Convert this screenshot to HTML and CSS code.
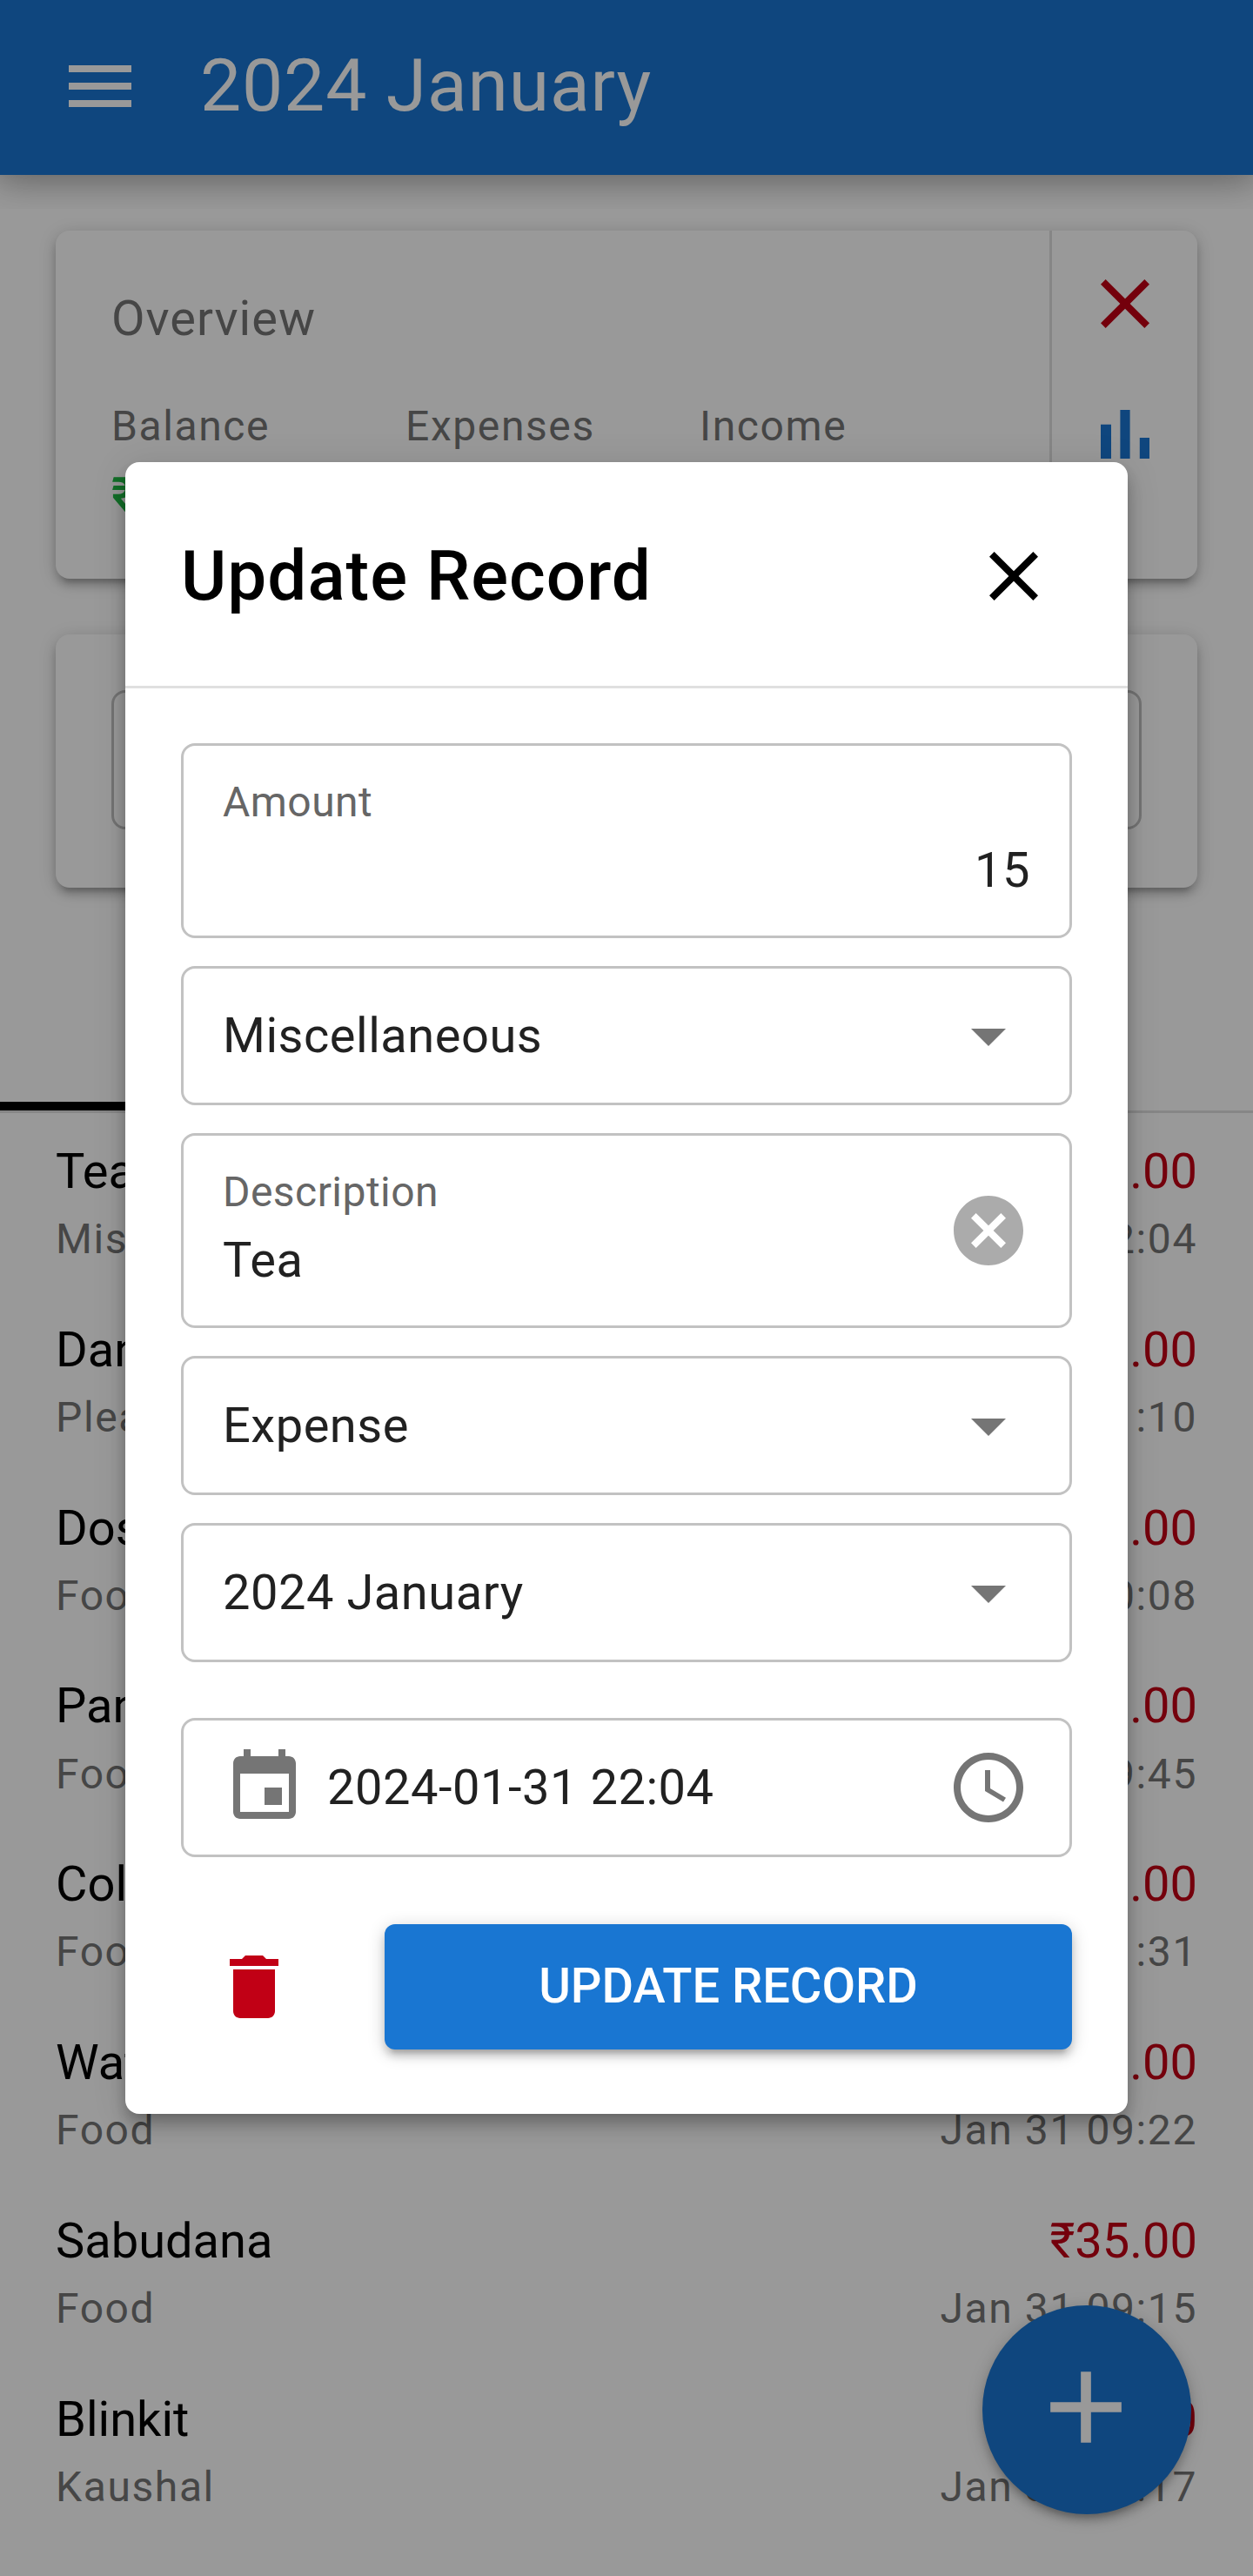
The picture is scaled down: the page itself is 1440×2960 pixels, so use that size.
FILE: index.html
```
<!DOCTYPE html>
<html lang="en">
<head>
<meta charset="utf-8">
<title>2024 January</title>
<link rel="stylesheet" href="styles.css">
</head>
<body>
<div class="app">
  <header class="toolbar">
    <button class="icon-btn" aria-label="Menu"><svg class="icon" viewBox="0 0 24 24"><path d="M3 18h18v-2H3v2zm0-5h18v-2H3v2zm0-7v2h18V6H3z"/></svg></button>
    <h1 class="toolbar-title">2024 January</h1>
  </header>

  <main>
    <section class="card overview">
      <div class="overview-main">
        <div class="overview-title">Overview</div>
        <div class="stats">
          <div class="stat"><div class="stat-label">Balance</div><div class="stat-value positive">₹985.00</div></div>
          <div class="stat"><div class="stat-label">Expenses</div><div class="stat-value negative">₹515.00</div></div>
          <div class="stat"><div class="stat-label">Income</div><div class="stat-value positive">₹1500.00</div></div>
        </div>
      </div>
      <div class="overview-actions">
        <svg class="icon negative" viewBox="0 0 24 24"><path d="M19 6.41L17.59 5 12 10.59 6.41 5 5 6.41 10.59 12 5 17.59 6.41 19 12 13.41 17.59 19 19 17.59 13.41 12z"/></svg>
        <svg class="icon primary" viewBox="0 0 24 24"><path d="M5 9.2h3V19H5zM10.6 5h2.8v14h-2.8zm5.6 8H19v6h-2.8z"/></svg>
      </div>
    </section>

    <section class="card filter"><div class="field"></div></section>

    <nav class="tabs"><div class="tab active"></div><div class="tab"></div></nav>

    <ul class="records">
      <li class="record"><div><div class="name">Tea</div><div class="meta">Misc</div></div><div class="end"><div class="name negative">₹15.00</div><div class="meta">Jan 31 22:04</div></div></li>
      <li class="record"><div><div class="name">Dan</div><div class="meta">Pleasure</div></div><div class="end"><div class="name negative">₹51.00</div><div class="meta">Jan 31 21:10</div></div></li>
      <li class="record"><div><div class="name">Dosa</div><div class="meta">Food</div></div><div class="end"><div class="name negative">₹71.00</div><div class="meta">Jan 31 20:08</div></div></li>
      <li class="record"><div><div class="name">Pan</div><div class="meta">Food</div></div><div class="end"><div class="name negative">₹21.00</div><div class="meta">Jan 31 19:45</div></div></li>
      <li class="record"><div><div class="name">Cold drink</div><div class="meta">Food</div></div><div class="end"><div class="name negative">₹41.00</div><div class="meta">Jan 31 11:31</div></div></li>
      <li class="record"><div><div class="name">Water</div><div class="meta">Food</div></div><div class="end"><div class="name negative">₹21.00</div><div class="meta">Jan 31 09:22</div></div></li>
      <li class="record"><div><div class="name">Sabudana</div><div class="meta">Food</div></div><div class="end"><div class="name negative">₹35.00</div><div class="meta">Jan 31 09:15</div></div></li>
      <li class="record"><div><div class="name">Blinkit</div><div class="meta">Kaushal</div></div><div class="end"><div class="name negative">₹90.00</div><div class="meta">Jan 31 00:17</div></div></li>
    </ul>
  </main>

  <button class="fab" aria-label="Add record"><svg viewBox="0 0 24 24"><path d="M19 13h-6v6h-2v-6H5v-2h6V5h2v6h6v2z"/></svg></button>

  <div class="backdrop">
    <section class="dialog" role="dialog">
      <div class="dialog-head">
        <h2 class="dialog-title">Update Record</h2>
        <button class="icon-btn" aria-label="Close"><svg class="icon" viewBox="0 0 24 24"><path d="M19 6.41L17.59 5 12 10.59 6.41 5 5 6.41 10.59 12 5 17.59 6.41 19 12 13.41 17.59 19 19 17.59 13.41 12z"/></svg></button>
      </div>
      <div class="dialog-body">
        <div class="field labelled">
          <div class="control"><div class="label">Amount</div><div class="value number">15</div></div>
        </div>
        <div class="field">
          <div class="value">Miscellaneous</div>
          <svg class="icon" viewBox="0 0 24 24"><path d="M7 10l5 5 5-5z"/></svg>
        </div>
        <div class="field labelled">
          <div class="control"><div class="label">Description</div><div class="value">Tea</div></div>
          <svg class="icon clear" viewBox="0 0 24 24"><path d="M12 2C6.47 2 2 6.47 2 12s4.47 10 10 10 10-4.47 10-10S17.53 2 12 2zm5 13.59L15.59 17 12 13.41 8.41 17 7 15.59 10.59 12 7 8.41 8.41 7 12 10.59 15.59 7 17 8.41 13.41 12 17 15.59z"/></svg>
        </div>
        <div class="field">
          <div class="value">Expense</div>
          <svg class="icon" viewBox="0 0 24 24"><path d="M7 10l5 5 5-5z"/></svg>
        </div>
        <div class="field">
          <div class="value">2024 January</div>
          <svg class="icon" viewBox="0 0 24 24"><path d="M7 10l5 5 5-5z"/></svg>
        </div>
        <div class="field date">
          <svg class="icon" viewBox="0 0 24 24"><path d="M17 12h-5v5h5v-5zM16 1v2H8V1H6v2H5c-1.11 0-1.99.9-1.99 2L3 19c0 1.1.89 2 2 2h14c1.1 0 2-.9 2-2V5c0-1.1-.9-2-2-2h-1V1h-2zm3 18H5V8h14v11z"/></svg>
          <div class="value">2024-01-31 22:04</div>
          <svg class="icon" viewBox="0 0 24 24"><path d="M11.99 2C6.47 2 2 6.48 2 12s4.47 10 9.99 10C17.52 22 22 17.52 22 12S17.52 2 11.99 2zM12 20c-4.42 0-8-3.58-8-8s3.58-8 8-8 8 3.58 8 8-3.58 8-8 8zm.5-13H11v6l5.25 3.15.75-1.23-4.5-2.67z"/></svg>
        </div>
        <div class="actions">
          <button class="delete" aria-label="Delete"><svg class="icon" viewBox="0 0 24 24"><path d="M6 19c0 1.1.9 2 2 2h8c1.1 0 2-.9 2-2V7H6v12zM19 4h-3.5l-1-1h-5l-1 1H5v2h14V4z"/></svg></button>
          <button class="submit">Update Record</button>
        </div>
      </div>
    </section>
  </div>
</div>
</body>
</html>
```
FILE: styles.css
```
:root {
  --primary: #1976d2;
  --negative: #c10015;
  --positive: #21ba45;
  --shadow: 0 4px 20px rgba(0, 0, 0, .2), 0 8px 8px rgba(0, 0, 0, .14), 0 12px 4px -8px rgba(0, 0, 0, .12);
}

* { box-sizing: border-box; }

body {
  margin: 0;
  background: #fff;
  color: #000;
  font: 400 56px/1.5 Roboto, "Liberation Sans", sans-serif;
}

h1, h2, ul { margin: 0; padding: 0; }
button { border: 0; padding: 0; background: none; color: inherit; font: inherit; }

.app {
  position: relative;
  width: 1440px;
  height: 2960px;
  overflow: hidden;
}

.icon { display: block; width: 96px; height: 96px; flex: none; fill: currentColor; }
.primary { color: var(--primary); }
.negative { color: var(--negative); }
.positive { color: var(--positive); }

.icon-btn {
  display: flex;
  align-items: center;
  justify-content: center;
  width: 134px;
  height: 134px;
}

/* Header */
.toolbar {
  display: flex;
  align-items: center;
  gap: 48px;
  height: 201px;
  padding: 0 48px 3px;
  background: var(--primary);
  color: #fff;
  box-shadow: 0 0 40px 8px rgba(0, 0, 0, .2), 0 0 40px rgba(0, 0, 0, .24);
  clip-path: inset(0 0 -39px 0);
}

.toolbar-title { font-size: 84px; font-weight: 400; letter-spacing: .01em; line-height: 1.5; }

/* Cards */
.card {
  margin: 64px 64px 0;
  border-radius: 16px;
  background: #fff;
  box-shadow: var(--shadow);
}

.overview { display: flex; height: 400px; }
.overview-main { flex: 1; padding: 61px 64px 0; border-right: 3px solid #e0e0e0; }
.overview-title { color: #757575; line-height: 80px; letter-spacing: .0179em; }
.stats { display: grid; grid-template-columns: repeat(3, 1fr); width: 1014px; margin-top: 44px; }
.stat-label { color: #757575; font-size: 48px; line-height: 80px; letter-spacing: .0333em; }
.stat-value { font-weight: 500; line-height: 78px; }
.overview-actions {
  display: flex;
  flex-direction: column;
  align-items: center;
  gap: 54px;
  width: 167px;
  padding-top: 36px;
}

.filter { padding: 64px 64px 67px; }

/* Tabs */
.tabs { display: flex; height: 259px; border-bottom: 3px solid #e0e0e0; }
.tab { flex: 1; }
.tab.active { border-bottom: 10px solid #000; }

/* Records */
.records { list-style: none; }
.record {
  display: flex;
  justify-content: space-between;
  height: 204.8px;
  padding: 32px 64px;
}
.end { text-align: right; }
.name { line-height: 67.2px; padding-top: 2px; }
.meta { margin-top: 15px; color: #757575; font-size: 48px; line-height: 57.6px; letter-spacing: .0333em; }

.fab {
  position: absolute;
  left: 1129px;
  top: 2649px;
  width: 240px;
  height: 240px;
  padding: 0 3px 6px 0;
  display: flex;
  align-items: center;
  justify-content: center;
  border-radius: 50%;
  background: var(--primary);
  color: #fff;
  box-shadow: var(--shadow);
}
.fab svg { width: 140px; height: 140px; fill: currentColor; }

/* Dialog */
.backdrop {
  position: absolute;
  inset: 0;
  display: flex;
  align-items: center;
  justify-content: center;
  background: rgba(0, 0, 0, .4);
}

.dialog {
  width: 1152px;
  height: 1898px;
  border-radius: 16px;
  background: #fff;
  box-shadow: 0 8px 16px -4px rgba(0, 0, 0, .2), 0 16px 20px rgba(0, 0, 0, .14), 0 4px 40px rgba(0, 0, 0, .12);
}

.dialog-head {
  display: flex;
  align-items: center;
  justify-content: space-between;
  height: 260px;
  padding: 4px 64px 0;
  border-bottom: 3px solid #e0e0e0;
}
.dialog-title { font-size: 80px; font-weight: 500; letter-spacing: .0125em; line-height: 128px; }

.dialog-body { display: flex; flex-direction: column; gap: 32px; padding: 63px 64px 0; }

.field {
  display: flex;
  align-items: center;
  justify-content: space-between;
  height: 160px;
  padding: 0 45px;
  border: 3px solid #c2c2c2;
  border-radius: 16px;
  color: #757575;
}
.field.labelled { height: 224px; }
.control { flex: 1; padding-top: 7px; }
.label { color: #666; font-size: 48px; line-height: 60px; letter-spacing: .00937em; }
.value { color: #212121; line-height: 96px; letter-spacing: .00937em; }
.number { text-align: right; }
.clear { opacity: .6; }

.date { margin-top: 32px; }
.date .value { flex: 1; padding-left: 24px; }

.actions { display: flex; align-items: center; justify-content: space-between; margin-top: 45px; }
.delete { display: flex; justify-content: center; width: 168px; color: var(--negative); }
.submit {
  width: 790px;
  height: 144px;
  padding-bottom: 2px;
  border-radius: 12px;
  background: var(--primary);
  color: #fff;
  font-weight: 500;
  text-transform: uppercase;
  box-shadow: var(--shadow);
}
```
